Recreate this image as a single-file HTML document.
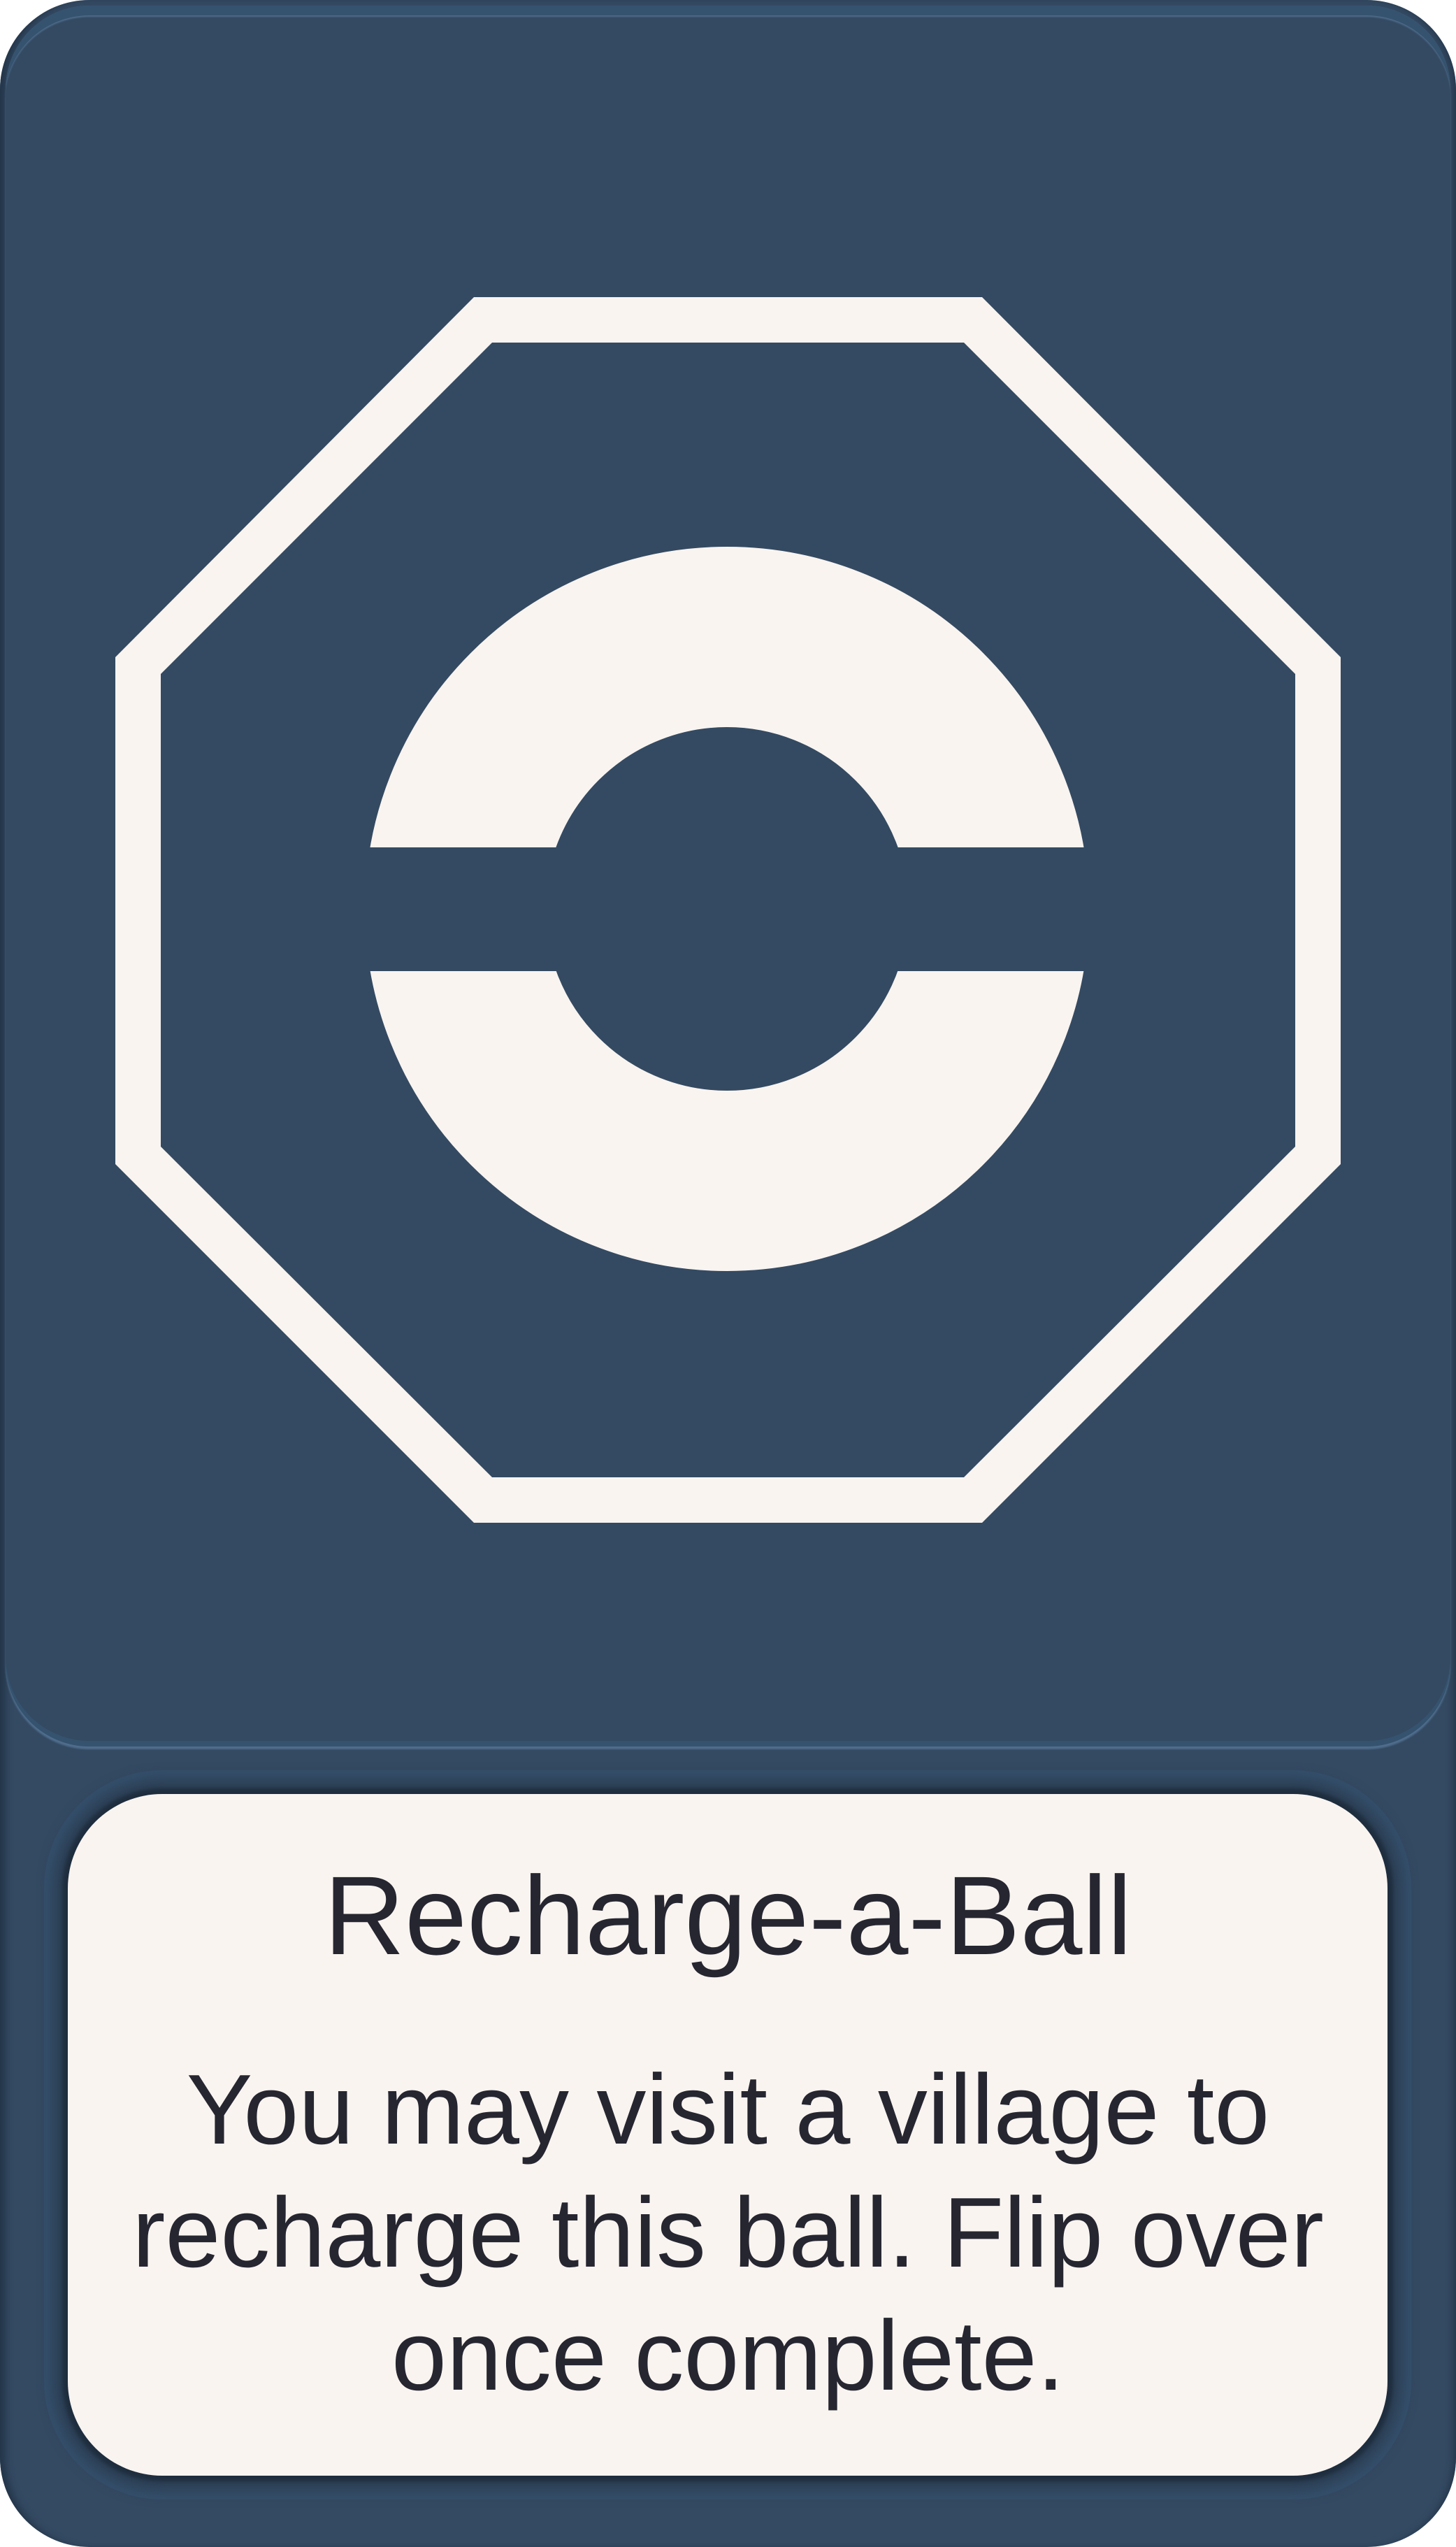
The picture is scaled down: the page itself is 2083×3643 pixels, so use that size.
<!DOCTYPE html>
<html><head><meta charset="utf-8"><style>
html,body{margin:0;padding:0;background:#fff;}
body{width:2083px;height:3643px;position:relative;overflow:hidden;}
.card{position:absolute;left:0;top:0;width:2083px;height:3643px;border-radius:128px;background:#344a62;box-shadow:inset 14px 0 10px -6px #24364a, inset -10px 0 10px -6px #24364a;}
.top{position:absolute;left:8px;top:8px;width:2067px;height:2482px;border-radius:120px;background:#344a62;box-shadow:inset 0 16px 0 -2px #35536f, inset 0 18px 2px -2px #4f6d8c, 0 8px 0 0 #35536f, 0 12px 2px 0 #4f6d8c;}
.box{position:absolute;left:97px;top:2566px;width:1888px;height:975px;border-radius:135px;background:#f9f4f0;box-shadow:0 0 6px 8px #1f2e3f, 0 0 20px 22px #2c3f54, 0 0 0 34px #35506d;}
.t{position:absolute;left:0;width:2083px;text-align:center;font-family:"Liberation Sans",sans-serif;color:#262631;white-space:nowrap;}
</style></head><body>
<div class="card"></div>
<div class="top"></div>
<svg style="position:absolute;left:0;top:0" width="2083" height="2480">
<polygon fill="#f9f4f0" points="678,425 1405,425 1918,940 1918,1665 1405,2178 678,2178 165,1665 165,940"/>
<polygon fill="#344a62" points="704,490 1379,490 1853,964 1853,1640 1379,2113 704,2113 230,1640 230,964"/>
<circle cx="1040" cy="1300" r="389" fill="none" stroke="#f9f4f0" stroke-width="258"/>
<rect x="480" y="1212" width="1120" height="177" fill="#344a62"/>
</svg>
<div class="box"></div>
<div class="t" style="top:2640px;font-size:160px;line-height:200px;">Recharge-a-Ball</div>
<div class="t" style="top:2930px;font-size:142px;line-height:176px;">You may visit a village to<br>recharge this ball. Flip over<br>once complete.</div>
</body></html>
